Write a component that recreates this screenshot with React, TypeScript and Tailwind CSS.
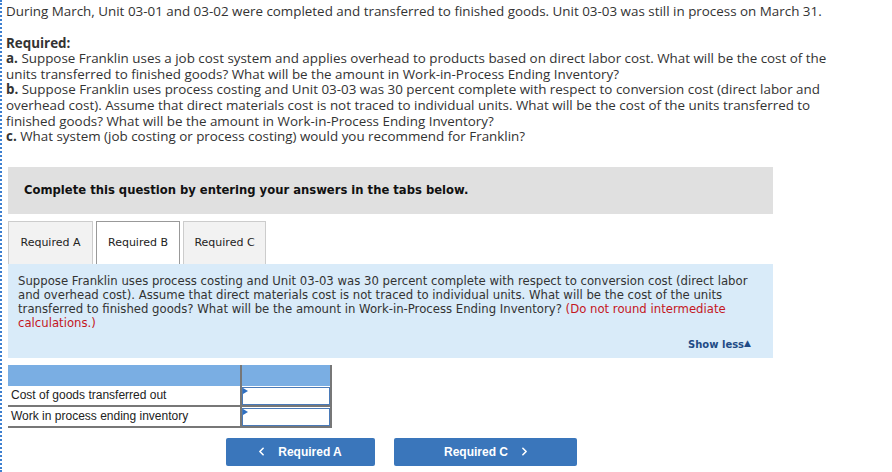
import React from 'react';
import { ChevronLeft, ChevronRight } from 'lucide-react';

const rows = ['Cost of goods transferred out', 'Work in process ending inventory'];

function AnswerCell() {
  return (
    <div className="relative h-full border border-[#4a7ab8] bg-white">
      <span className="absolute left-0 top-0 h-0 w-0 border-y-[3px] border-l-[5px] border-y-transparent border-l-[#2f6fc0]" />
    </div>
  );
}

export default function App() {
  return (
    <div className="h-[472px] w-[892px] overflow-hidden border-l-2 border-dotted border-[#3d7fd0] bg-white pl-1 pt-[4px] text-[#333]">
      {/* Question text */}
      <div className="w-[838px] font-['Open_Sans',sans-serif] text-[13.4px] leading-[15.6px] text-[#333]">
        <p>During March, Unit 03-01 and 03-02 were completed and transferred to finished goods. Unit 03-03 was still in process on March 31.</p>
        <p className="mt-[16px] font-bold">Required:</p>
        <p>
          <b>a.</b> Suppose Franklin uses a job cost system and applies overhead to products based on direct labor cost. What will be the cost of the units transferred to finished goods? What will be the amount in Work-in-Process Ending Inventory?
        </p>
        <p>
          <b>b.</b> Suppose Franklin uses process costing and Unit 03-03 was 30 percent complete with respect to conversion cost (direct labor and overhead cost). Assume that direct materials cost is not traced to individual units. What will be the cost of the units transferred to finished goods? What will be the amount in Work-in-Process Ending Inventory?
        </p>
        <p>
          <b>c.</b> What system (job costing or process costing) would you recommend for Franklin?
        </p>
      </div>

      {/* Instructions */}
      <div className="ml-[2px] mt-[22px] w-[765px] font-['DejaVu_Sans',sans-serif]">
        <div className="flex h-[47px] items-center bg-[#e0e0e0] px-4 text-[11.6px] font-bold text-[#111]">
          Complete this question by entering your answers in the tabs below.
        </div>

        {/* Tabs */}
        <div className="mt-[7px] flex h-[43px] items-stretch gap-[3px]">
          <div className="flex w-[85px] items-center justify-center border border-b-0 border-[#ccc] bg-[#f2f2f2] text-[11px] text-[#222]">Required A</div>
          <div className="flex w-[84px] items-center justify-center border border-b-0 border-[#999] bg-white text-[11px] text-[#222]">Required B</div>
          <div className="flex w-[83px] items-center justify-center border border-b-0 border-[#ccc] bg-[#f2f2f2] text-[11px] text-[#222]">Required C</div>
        </div>

        {/* Tab panel */}
        <div className="flex h-[94px] flex-col bg-[#d9ebf9] pl-[10px] pr-[16px] pt-[10px] pb-[6px]">
          <p className="text-[11.7px] leading-[14px] text-[#333]">
            Suppose Franklin uses process costing and Unit 03-03 was 30 percent complete with respect to conversion cost (direct labor and overhead cost). Assume that direct materials cost is not traced to individual units. What will be the cost of the units transferred to finished goods? What will be the amount in Work-in-Process Ending Inventory?{' '}
            <span className="text-[#c4171e]">(Do not round intermediate calculations.)</span>
          </p>
          <div className="mt-auto flex justify-end pr-[6px] text-[10px] font-bold text-[#1f4b86]">
            Show less<span className="text-[9px]">▲</span>
          </div>
        </div>
      </div>

      {/* Answer table */}
      <div className="ml-[2px] mt-[7px] w-[324px] font-['Liberation_Sans',sans-serif] text-[12px] text-[#222]">
        <div className="flex h-[21px] bg-[#7aaee3]">
          <div className="w-[234px] border-r-2 border-[#777]" />
          <div className="flex-1 border-r-2 border-[#777]" />
        </div>
        {rows.map((r) => (
          <div key={r} className="flex h-[21px] border-b-2 border-[#777]">
            <div className="flex w-[234px] items-center border-r-2 border-[#777] pl-[3px]">{r}</div>
            <div className="flex-1 border-r-2 border-[#777] pt-[1px]">
              <AnswerCell />
            </div>
          </div>
        ))}
      </div>

      {/* Navigation buttons */}
      <div className="mt-[10px] flex gap-[19px] pl-[220px] font-['Liberation_Sans',sans-serif] text-[12px] font-bold text-white">
        <button className="flex h-[28px] w-[149px] items-center justify-center gap-[10px] rounded-[2px] bg-[#3a76bb] pr-[4px]">
          <ChevronLeft size={13} strokeWidth={3} />
          <span>Required A</span>
        </button>
        <button className="flex h-[28px] w-[183px] items-center justify-center gap-[10px] rounded-[2px] bg-[#3a76bb] pl-[4px]">
          <span>Required C</span>
          <ChevronRight size={13} strokeWidth={3} />
        </button>
      </div>
    </div>
  );
}
